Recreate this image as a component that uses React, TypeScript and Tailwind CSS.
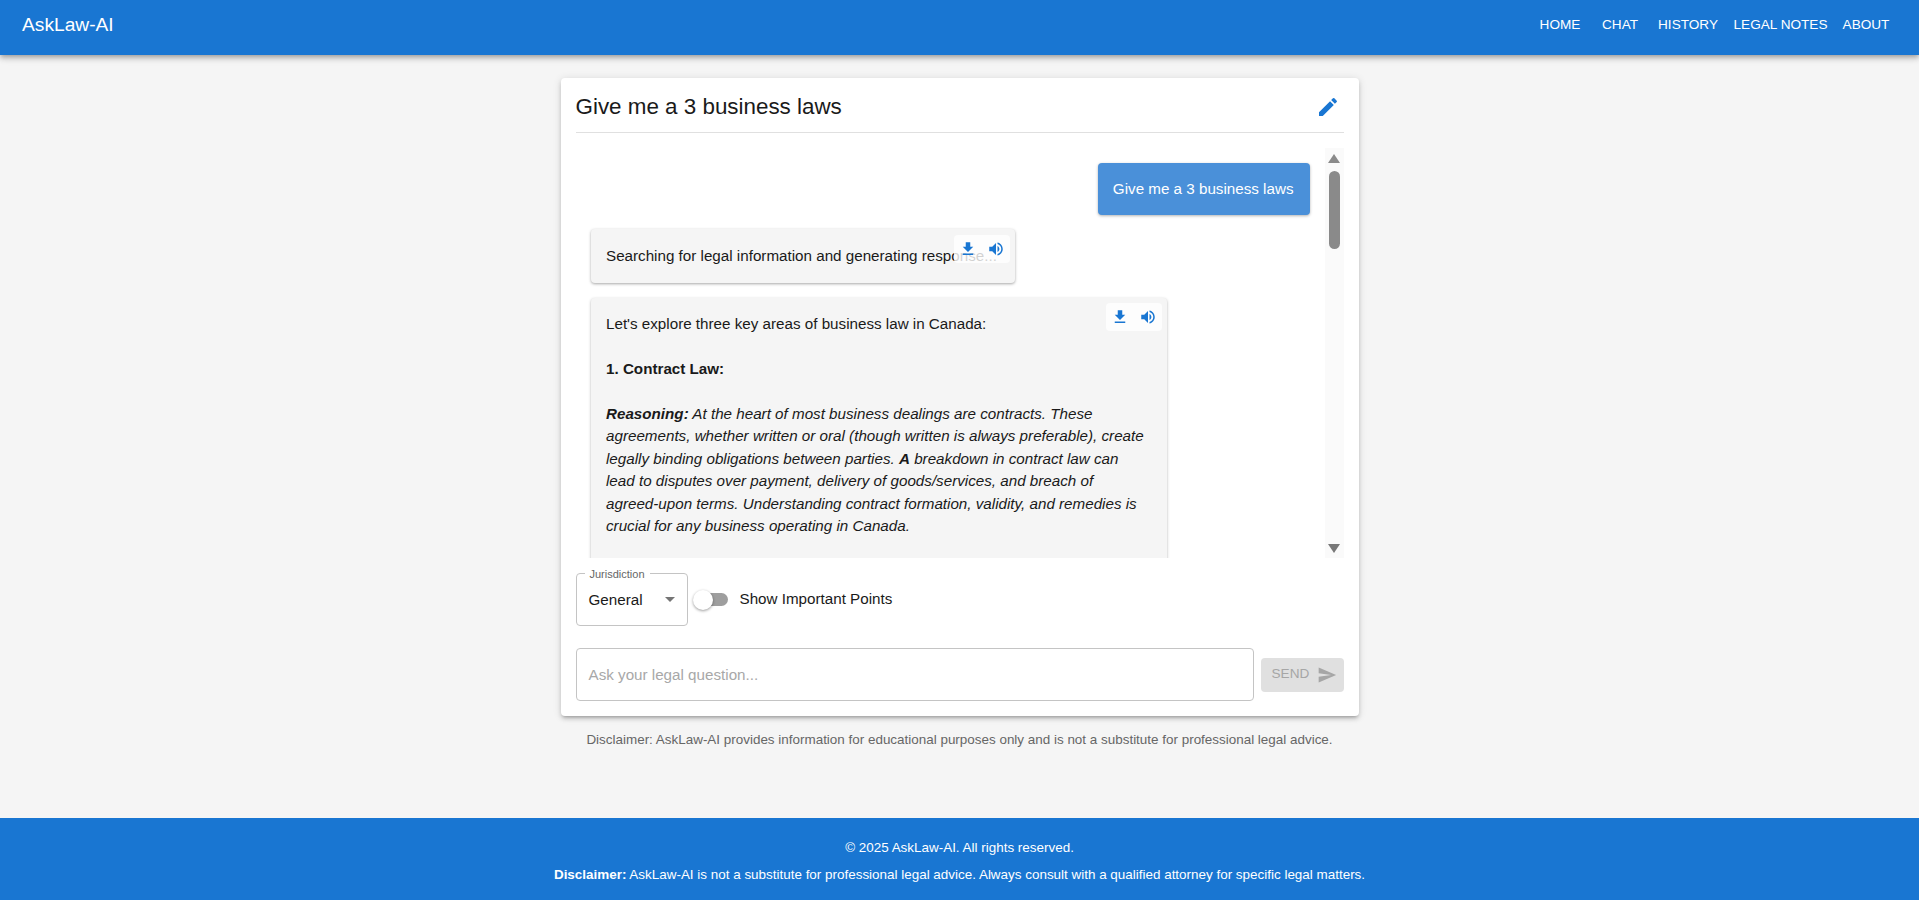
import React from "react";

const DOWNLOAD = "M5 20h14v-2H5zM19 9h-4V3H9v6H5l7 7z";
const VOLUME = "M3 9v6h4l5 5V4L7 9H3zm13.5 3c0-1.77-1.02-3.29-2.5-4.03v8.05c1.48-.73 2.5-2.25 2.5-4.02zM14 3.23v2.06c2.89.86 5 3.54 5 6.71s-2.11 5.85-5 6.71v2.06c4.01-.91 7-4.49 7-8.77s-2.99-7.86-7-8.77z";
const EDIT = "M3 17.25V21h3.75L17.81 9.94l-3.75-3.75zM20.71 7.04c.39-.39.39-1.02 0-1.41l-2.34-2.34a.9959.9959 0 0 0-1.41 0l-1.83 1.83 3.75 3.75z";
const SEND = "M2.01 21 23 12 2.01 3 2 10l15 2-15 2z";

function Icon({ d, className }: { d: string; className: string }) {
  return (
    <svg viewBox="0 0 24 24" className={className} fill="currentColor" aria-hidden="true">
      <path d={d} />
    </svg>
  );
}

function BubbleActions({ top }: { top: string }) {
  return (
    <div className={`absolute right-[5px] ${top} flex h-[28px] w-[56px] items-center justify-center gap-[10px] rounded bg-white/80 text-[#1976d2]`}>
      <Icon d={DOWNLOAD} className="h-[18px] w-[18px]" />
      <Icon d={VOLUME} className="h-[18px] w-[18px]" />
    </div>
  );
}

const NAV = [
  { label: "HOME", w: "w-[62px]" },
  { label: "CHAT", w: "w-[58px]" },
  { label: "HISTORY", w: "w-[78px]" },
  { label: "LEGAL NOTES", w: "w-[107px]" },
  { label: "ABOUT", w: "w-[64px]" },
];

export default function App() {
  return (
    <div className="flex h-[900px] flex-col overflow-hidden bg-[#f5f5f5] font-['Liberation_Sans',Arial,sans-serif] text-[#1a1a1a]">
      <header className="z-10 flex h-[55px] shrink-0 items-center justify-between bg-[#1976d2] pl-[22px] pr-[21px] text-white shadow-[0_2px_4px_-1px_rgba(0,0,0,0.2),0_4px_5px_0_rgba(0,0,0,0.14),0_1px_10px_0_rgba(0,0,0,0.12)]">
        <div className="-mt-[5px] text-[19.2px] leading-[50px]">AskLaw-AI</div>
        <nav className="-mt-[5px] flex items-center">
          {NAV.map((n) => (
            <div key={n.label} className={`${n.w} text-center text-[13.6px] leading-[48px]`}>
              {n.label}
            </div>
          ))}
        </nav>
      </header>

      <main className="flex flex-1 flex-col items-center pt-[23px]">
        <section className="flex h-[638px] w-[798px] flex-col rounded bg-white px-[15px] shadow-[0_3px_3px_-2px_rgba(0,0,0,0.2),0_3px_4px_0_rgba(0,0,0,0.14),0_1px_8px_0_rgba(0,0,0,0.12)]">
          <div className="flex h-[55px] shrink-0 items-center justify-between border-b border-[#e0e0e0] pr-[4px] pt-[3px]">
            <h1 className="text-[22.4px] leading-[32px]">Give me a 3 business laws</h1>
            <Icon d={EDIT} className="h-[24px] w-[24px] text-[#1976d2]" />
          </div>

          <div className="mt-[15px] flex h-[410px] shrink-0 overflow-hidden">
            <div className="min-w-0 flex-1 overflow-hidden pl-[15px] pr-[15px] pt-[15px]">
              <div className="flex justify-end">
                <div className="rounded bg-[#4a90d9] py-[14px] pl-[15px] pr-[16px] text-[15.2px] leading-[24px] text-white shadow-[0_1px_3px_rgba(0,0,0,0.3)]">
                  Give me a 3 business laws
                </div>
              </div>
              <div className="relative mt-[14px] w-[424px] rounded bg-[#f5f5f5] py-[16px] pl-[15.5px] pr-[16px] text-[15.2px] leading-[22.4px] shadow-[0_1px_3px_rgba(0,0,0,0.35)]">
                <span className="whitespace-nowrap">Searching for legal information and generating response...</span>
                <BubbleActions top="top-[6px]" />
              </div>
              <div className="relative mt-[14.6px] w-[576px] rounded bg-[#f5f5f5] pb-[16px] pl-[15.5px] pr-[20px] pt-[15.4px] text-[15.2px] leading-[22.4px] shadow-[0_1px_3px_rgba(0,0,0,0.3)]">
                <p>Let's explore three key areas of business law in Canada:</p>
                <p className="mt-[22.4px] font-bold">1. Contract Law:</p>
                <p className="mt-[22.4px] italic">
                  <strong>Reasoning:</strong> At the heart of most business dealings are contracts. These agreements, whether written or oral (though written is always preferable), create legally binding obligations between parties. <strong>A</strong> breakdown in contract law can lead to disputes over payment, delivery of goods/services, and breach of agreed-upon terms. Understanding contract formation, validity, and remedies is crucial for any business operating in Canada.
                </p>
                <p className="mt-[22.4px]">&nbsp;</p>
                <BubbleActions top="top-[5px]" />
              </div>
            </div>
            <div className="flex w-[19px] shrink-0 flex-col items-center bg-[#fafafa]">
              <div className="mt-[6px] h-0 w-0 border-x-[6.5px] border-b-[9px] border-x-transparent border-b-[#8a8a8a]" />
              <div className="mt-[8px] h-[78px] w-[11px] rounded-full bg-[#8a8a8a]" />
              <div className="mt-auto mb-[5px] h-0 w-0 border-x-[6.5px] border-t-[9px] border-x-transparent border-t-[#787878]" />
            </div>
          </div>

          <div className="mt-[15px] flex h-[53px] shrink-0 items-center">
            <div className="relative flex h-[53px] w-[112px] items-center rounded border border-[#c4c4c4] pl-[12px]">
              <span className="absolute -top-[7px] left-[8px] bg-white px-[5px] text-[11px] leading-[14px] text-[#666666]">Jurisdiction</span>
              <span className="text-[15.2px] leading-[24px]">General</span>
              <span className="absolute right-[12px] top-[23px] h-0 w-0 border-x-[5px] border-t-[5px] border-x-transparent border-t-[#757575]" />
            </div>
            <div className="relative ml-[5px] h-[20px] w-[35px]">
              <div className="absolute left-[10px] right-0 top-[3.5px] h-[13px] rounded-full bg-[#9e9e9e]" />
              <div className="absolute left-0 top-0 h-[20px] w-[20px] rounded-full bg-white shadow-[0_1px_3px_rgba(0,0,0,0.4)]" />
            </div>
            <span className="-mt-[1px] ml-[12px] text-[15.2px] leading-[24px]">Show Important Points</span>
          </div>

          <div className="mt-[22px] flex h-[53px] shrink-0 items-center gap-[7px]">
            <div className="flex h-[53px] w-[678px] items-center rounded border border-[#c4c4c4] pl-[12px] pt-[2px] text-[15.2px] text-[#a8a8a8]">
              Ask your legal question...
            </div>
            <div className="flex h-[34px] flex-1 items-center gap-[8px] rounded bg-[#e0e0e0] pl-[11px] text-[13.6px] text-[#a6a6a6]">
              SEND
              <Icon d={SEND} className="h-[20px] w-[20px]" />
            </div>
          </div>
        </section>

        <p className="mt-[14px] text-[13.44px] leading-[20px] text-[#666666]">
          Disclaimer: AskLaw-AI provides information for educational purposes only and is not a substitute for professional legal advice.
        </p>
      </main>

      <footer className="flex h-[82px] shrink-0 flex-col items-center bg-[#1976d2] pt-[20px] text-[13.44px] leading-[20px] text-white">
        <p>© 2025 AskLaw-AI. All rights reserved.</p>
        <p className="mt-[7px]"><strong>Disclaimer:</strong> AskLaw-AI is not a substitute for professional legal advice. Always consult with a qualified attorney for specific legal matters.</p>
      </footer>
    </div>
  );
}
